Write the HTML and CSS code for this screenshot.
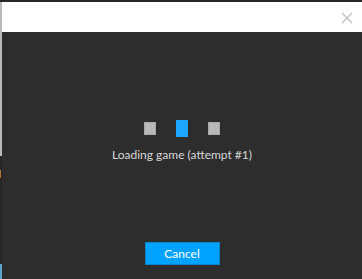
FILE: index.html
```html
<!DOCTYPE html>
<html>
<head>
<meta charset="utf-8">
<link rel="stylesheet" href="styles.css">
</head>
<body>
<div class="topstrip"></div>
<div class="frame">
  <div class="edge">
    <div class="edge-light"></div>
    <div class="edge-dark"><span class="edge-orange"></span></div>
    <div class="edge-blue"></div>
  </div>
  <div class="dialog">
    <div class="header">
      <svg class="close" width="12" height="12" viewBox="0 0 12 12">
        <path d="M1 1 L11 11 M11 1 L1 11" stroke="#bdbdbd" stroke-width="1.2" fill="none"/>
      </svg>
    </div>
    <div class="body">
      <div class="loader">
        <span class="sq"></span>
        <span class="sq active"></span>
        <span class="sq"></span>
      </div>
      <div class="msg">Loading game (attempt #1)</div>
      <div class="spacer"></div>
      <button class="cancel">Cancel</button>
    </div>
  </div>
</div>
</body>
</html>
```
FILE: styles.css
```css
html, body {
  margin: 0;
  padding: 0;
  width: 362px;
  height: 279px;
  overflow: hidden;
  background: #2d2d2d;
  font-family: "Lato", "Liberation Sans", sans-serif;
}
body {
  display: flex;
  flex-direction: column;
}
.topstrip {
  height: 2px;
  background: #262626;
  flex: none;
}
.frame {
  flex: 1;
  display: flex;
}
.edge {
  width: 2px;
  display: flex;
  flex-direction: column;
  flex: none;
}
.edge-light {
  height: 154px;
  background: #b9b9b9;
}
.edge-dark {
  flex: 1;
  background: #262626;
  display: flex;
  flex-direction: column;
}
.edge-orange {
  margin-top: 14px;
  width: 1px;
  height: 8px;
  background: #b07a3a;
}
.edge-blue {
  height: 15px;
  background: #5aa6c8;
}
.dialog {
  flex: 1;
  display: flex;
  flex-direction: column;
}
.header {
  height: 30px;
  background: #ffffff;
  display: flex;
  justify-content: flex-end;
  align-items: center;
  padding-right: 9px;
  flex: none;
}
.close {
  display: block;
  margin-top: 1px;
}
.body {
  flex: 1;
  background: #2d2d2d;
  display: flex;
  flex-direction: column;
  align-items: center;
  padding-top: 88px;
  padding-bottom: 14px;
}
.loader {
  display: flex;
  align-items: center;
  gap: 20px;
  height: 17px;
}
.sq {
  width: 12px;
  height: 13px;
  background: #b9b9b9;
  box-shadow: inset 0 0 0 1px #a8a8a8;
}
.sq.active {
  height: 17px;
  background: #1ea6ff;
  box-shadow: none;
}
.msg {
  margin-top: 9px;
  font-size: 12px;
  color: #d8d8d8;
  line-height: 18px;
}
.spacer {
  flex: 1;
}
.cancel {
  width: 75px;
  height: 23px;
  background: #00a2ff;
  border: 1px solid #0a84cf;
  color: #ffffff;
  font-family: "Lato", "Liberation Sans", sans-serif;
  font-size: 12px;
  padding: 0;
  line-height: 20px;
}
```
